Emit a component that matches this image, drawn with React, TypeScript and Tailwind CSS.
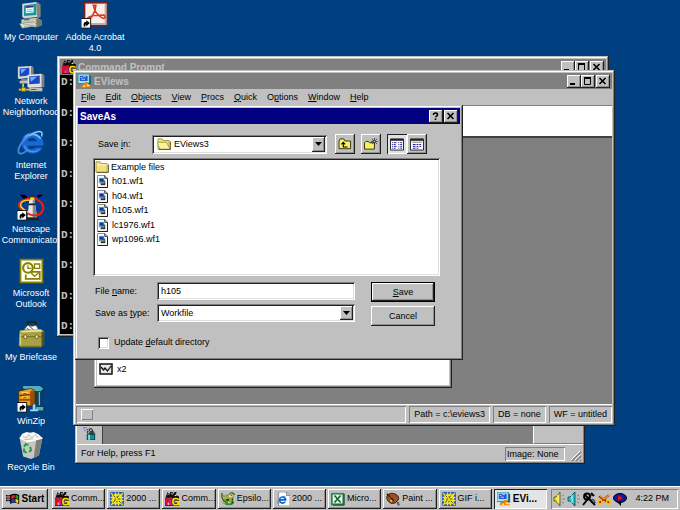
import type { ReactNode } from 'react';
import clsx from 'clsx';

const raised =
  'bg-[#c0c0c0] shadow-[inset_-1px_-1px_0_#202020,inset_1px_1px_0_#fff,inset_-2px_-2px_0_#909090]';
const windowFrame =
  'bg-[#c0c0c0] shadow-[inset_-1px_-1px_0_#202020,inset_1px_1px_0_#c0c0c0,inset_-2px_-2px_0_#808080,inset_2px_2px_0_#fff]';
const field =
  'bg-white shadow-[inset_1px_1px_0_#808080,inset_-1px_-1px_0_#fff,inset_2px_2px_0_#202020,inset_-2px_-2px_0_#dfdfdf]';
const groove = 'shadow-[inset_1px_1px_0_#808080,inset_-1px_-1px_0_#fff]';

/* ---------- desktop icons (32 unit grid) ---------- */

function Shortcut() {
  return (
    <g>
      <path d="M0 20h11v11H0z" fill="#fff" stroke="#000" />
      <path d="M3 29v-3q0-2 2-2h1v-2l4 3-4 4v-2H5v2z" fill="#000" />
    </g>
  );
}

function ComputerIcon() {
  return (
    <svg viewBox="0 0 32 32" className="h-7 w-7">
      <path d="M6 3 22 1l3 2v15L8 20l-2-2z" fill="#d8d8c8" />
      <path d="m22 1 5 3v14l-4 2z" fill="#808878" />
      <path d="m8 5 14-2v13L8 17z" fill="#189898" />
      <path d="m10 6 9-1v8l-9 1z" fill="#f4ffff" />
      <path d="m10 6 9-1v2l-9 1z" fill="#2030a0" />
      <path d="M11 10h7M11 12h7" stroke="#60c0c8" />
      <path d="M5 21 22 19l6 3v6l-7 2-16-2z" fill="#c8c8b8" />
      <path d="m22 20 6 2v6l-6 2z" fill="#707868" />
      <path d="M3 26 19 24l4 4-17 3z" fill="#f0f0e0" stroke="#808070" strokeWidth=".8" />
      <path d="M6 27.500 19 26M8 29l12-1.500" stroke="#909088" strokeWidth=".8" />
      <path d="M8 21.500h6" stroke="#404040" />
    </svg>
  );
}

function AcrobatIcon() {
  return (
    <svg viewBox="0 0 32 32" className="h-7 w-7">
      <path d="M3 1h28v28H3z" fill="#802018" />
      <path d="M5 3h24v24H5z" fill="#f8f0ec" />
      <path d="M27 3h2v24H5v-2h22z" fill="#b8b0a8" />
      <path
        d="M14 5h3l-1 6q-3 7-7 11-3 0-1-3 4-3 18-3 3 2 0 4-6-2-10-9z"
        fill="none"
        stroke="#e03820"
        strokeWidth="1.800"
      />
      <Shortcut />
    </svg>
  );
}

function NetworkIcon() {
  return (
    <svg viewBox="0 0 32 32" className="h-7 w-7">
      <path d="M1 2 16 1l2 1v12L3 16l-2-1z" fill="#d8d8d0" />
      <path d="m3 4 11-1v9L3 13z" fill="#1848c8" />
      <path d="m4 5 7-1-6 6z" fill="#78b0f8" />
      <path d="m16 1 3 2v11l-3 1zM5 16h9v3H5z" fill="#808080" />
      <path d="M3 18h14v3H3z" fill="#c0c0b8" />
      <path d="M12 11 28 10l3 2v13l-17 1-2-1z" fill="#e0e0d8" />
      <path d="m14 13 12-1v9l-12 1z" fill="#1848c8" />
      <path d="m15 14 8-1-7 6z" fill="#78b0f8" />
      <path d="m28 10 3 2v13h-3z" fill="#808080" />
      <path d="M14 26h15v4H14z" fill="#c0c0b8" />
      <path d="M16 28h6" stroke="#505050" />
      <path d="M7 21v6M2 28h12" stroke="#e8c820" strokeWidth="2" />
      <path d="M5 26h5v4H5z" fill="#f0d830" stroke="#806000" />
    </svg>
  );
}

function ExplorerIcon() {
  return (
    <svg viewBox="0 0 32 32" className="h-7 w-7">
      <path
        d="M17 4q-8 0-11 7-2 6 1 11 4 6 11 6 8 0 11-7h-8q-1 2-4 2-4 0-5-4h18q1-6-3-10-4-5-10-5zm-5 10q1-4 5-4t6 4z"
        fill="#1868d8"
      />
      <path d="M8 13q2-7 9-7 7 0 10 5" fill="none" stroke="#78c0f8" strokeWidth="2" />
      <path d="M8 19q3 7 10 7 5 0 8-3" fill="none" stroke="#4898f0" strokeWidth="1.500" />
      <path
        d="M28 9q3-7-4-6Q14 5 6 15-1 25 3 28q3 1 8-3"
        fill="none"
        stroke="#4888d8"
        strokeWidth="2"
      />
      <path d="M28 8q2-6-4-5-5 1-10 5" fill="none" stroke="#b8e0ff" />
    </svg>
  );
}

function NetscapeIcon() {
  return (
    <svg viewBox="0 0 32 32" className="h-7 w-7">
      <path d="M2 1h28v28H2z" fill="#083890" />
      <path d="M3 2h6l3 3-4 2zM23 2h7l-6 4z" fill="#000" />
      <path d="m14 4 3-3 4 3v4h-7z" fill="#303030" />
      <path d="M14 8h6l3 20H12z" fill="#e8e8e8" />
      <path d="M18 8h2l3 20h-5z" fill="#888" />
      <path d="M13 12h8v2h-8zM10 28h15v3H10z" fill="#202020" />
      <path d="M15 5h5v3h-5z" fill="#f8e020" />
      <path d="M14 6Q2 8 2 14q1 6 14 11 9 2 12-3" fill="none" stroke="#e82010" strokeWidth="2" />
      <path d="M15 8Q4 8 4 14q1 4 9 8" fill="none" stroke="#f8d820" strokeWidth="1.800" />
      <path d="M20 6q10 4 10 11 0 5-6 8" fill="none" stroke="#e82010" strokeWidth="2.500" />
      <Shortcut />
    </svg>
  );
}

function OutlookIcon() {
  return (
    <svg viewBox="0 0 32 32" className="h-7 w-7">
      <path d="M3 2h27v28H3z" fill="#888008" />
      <path d="M5 4h23v24H5z" fill="#fffff0" />
      <path d="M13 17h13v8H10v-5" fill="none" stroke="#888008" strokeWidth="2" />
      <path d="m16 18 4 4 5-4" fill="none" stroke="#888008" strokeWidth="1.500" />
      <circle cx="12.500" cy="12.500" r="5.500" fill="#fffff0" stroke="#888008" strokeWidth="2.500" />
      <path d="M12.500 9.500v3.500H16" fill="none" stroke="#888008" strokeWidth="1.500" />
      <path d="M20 8h6v5h-6z" fill="none" stroke="#888008" strokeWidth="1.500" />
    </svg>
  );
}

function BriefcaseIcon() {
  return (
    <svg viewBox="0 0 32 32" className="h-7 w-7">
      <path d="M12 8V3q0-2 3-2h4q3 0 3 2v4" fill="none" stroke="#202010" strokeWidth="1.800" />
      <path d="m8 10 4-5 5 1 5-1 3 6z" fill="#fff" stroke="#606060" strokeWidth=".8" />
      <path d="m11 8 4 3M14 6l5 4" stroke="#404040" />
      <path d="M3 11 27 9l4 3v15l-4 3H5l-3-2z" fill="#a8a048" />
      <path d="m3 11 24-1 4 2-25 1z" fill="#e8e088" />
      <path d="M28 12h3v15l-3 3z" fill="#585010" />
      <path d="M3 18h25M5 29h22" stroke="#686018" />
      <path d="M8 16h3v4H8zM21 16h3v4h-3z" fill="#f8f0a0" stroke="#504808" strokeWidth=".7" />
      <path d="M4 14v13" stroke="#d8d078" strokeWidth="1.500" />
    </svg>
  );
}

function WinZipIcon() {
  return (
    <svg viewBox="0 0 32 32" className="h-7 w-7">
      <path d="M6 2 26 1l4 3v4h-4l-3 3v11l3 3h4v4l-5 1" fill="none" stroke="#103840" strokeWidth="2" />
      <path d="M7 1h19l4 3-3 3h-4L7 4z" fill="#50b0c0" />
      <path d="M23 7h4v17h-4z" fill="#184850" />
      <path d="M25 8h1v15h-1z" fill="#90e0e8" />
      <path d="M22 25h8v4h-9z" fill="#50b0c0" />
      <path d="M18 22h3v7h-3zM15 28h9v2h-9z" fill="#a0d8e0" />
      <path d="m2 7 13-3 5 2v15l-5 3-13-1z" fill="#f0a018" stroke="#402000" strokeWidth=".8" />
      <path d="m15 7 5-1v15l-5 3z" fill="#985008" />
      <path d="m3 12 12-1M3 17h12" stroke="#803000" strokeWidth="1.500" />
      <path d="M6 9h6M6 14h6" stroke="#fff080" strokeWidth="2" />
      <path d="M7 9.500h4M7 14.500h4" stroke="#702000" />
      <Shortcut />
    </svg>
  );
}

function RecycleIcon() {
  return (
    <svg viewBox="0 0 32 32" className="h-7 w-7">
      <path d="m3 8 10 4 16-4-4 20-9 4-9-3z" fill="#c8c8c0" />
      <path d="m22 10 7-2-4 20-6 3z" fill="#808078" />
      <path d="m3 8 3-5 5-2 4 1 4-1 6 3 4 4-11 4H12z" fill="#f8f8f4" />
      <path d="m7 6 4 2 2-4 4 4 4-4 3 4M6 9l5 1 5-1 5 1" fill="none" stroke="#b0b0a8" />
      <path d="m3 8 9 4 17-4" fill="none" stroke="#fff" strokeWidth="1.500" />
      <path
        d="m8 18 2-3 3 1m2 2 1 4-2 2m-3 1-3-2v-3"
        fill="none"
        stroke="#20a040"
        strokeWidth="2.300"
      />
    </svg>
  );
}

/* ---------- small icons (16 unit grid) ---------- */

function PromptIcon() {
  return (
    <svg viewBox="0 0 16 16" className="h-[14px] w-[14px] shrink-0">
      <path d="M1 5 3 0l2 3 1-3h3L8 4l3-4h3l-2 3 4 2v2H1z" fill="#101010" />
      <path d="M3 3h1M7 2h1M11 4h2M13 1h1" stroke="#fff" />
      <path d="M0 6h3l1 2 1-2h3v9H5v-3H3v3H0z" fill="#e00828" />
      <path d="M5 9h4v6H5z" fill="#d018a0" />
      <path d="M15 8q-6-2-6 3t6 3v-3h-3" fill="none" stroke="#302000" strokeWidth="3.500" />
      <path d="M15 8q-6-2-6 3t6 3v-3h-3" fill="none" stroke="#f8e000" strokeWidth="2" />
      <path d="M0 15.500h9" stroke="#400010" />
    </svg>
  );
}

function EViewsIcon() {
  return (
    <svg viewBox="0 0 16 16" className="h-[14px] w-[14px] shrink-0">
      <path d="M0 0h13v11H0z" fill="#a0e8f0" stroke="#086878" strokeWidth=".8" />
      <path d="M2 2h9v6H2z" fill="#2858d0" />
      <path d="M3 4h2M6 3h3M4 6h4" stroke="#c0d8ff" />
      <path d="M13 2h2v10H8v-2h5z" fill="#106880" />
      <path d="M4 11h7v2H4z" fill="#1898a8" />
      <path d="M3 15q1-4 4-3l1-3h3l1 3 3 3z" fill="#f08010" />
      <path d="M6 14h2M10 13h3" stroke="#fff060" strokeWidth="2" />
    </svg>
  );
}

function StarburstIcon() {
  return (
    <svg viewBox="0 0 16 16" className="h-[14px] w-[14px] shrink-0">
      <path d="M0 0h16v16H0z" fill="#2860c8" />
      <path
        d="m0 0 5 3 1-3 2 3 2-3 1 3 5-3-3 5 3 1-3 2 3 2-3 1 3 5-5-3-1 3-2-3-2 3-1-3-5 3 3-5-3-1 3-2-3-2 3-1z"
        fill="#f8e820"
      />
      <path d="m4 4 2 2m4-2-2 3m4 5-2-2m-6 2 2-3M5 8h2M9 8h3M8 5v1M8 10v2M3 2l1 1M13 13l-1-1" stroke="#403800" />
    </svg>
  );
}

function EpsilonIcon() {
  return (
    <svg viewBox="0 0 16 16" className="h-[14px] w-[14px] shrink-0">
      <path d="m1 1 3 3 3-2 2 3 3-4 3 1-1 12-6 1-6-2z" fill="#90a848" />
      <path d="M1 1v5l2 4 3 1M8 4l4-4 4 3" fill="none" stroke="#203010" />
      <path d="M3 6h3v2H3zM9 3h4v3H9z" fill="#f8f0a0" />
      <path d="M4 7h1M11 4h1M6 9h3" stroke="#000" strokeWidth="1.500" />
      <path d="M5 11h8v4H5z" fill="#289050" />
      <path d="M8 12h3" stroke="#f0e040" strokeWidth="1.500" />
      <path d="M13 7v6l2-1" fill="none" stroke="#104020" />
    </svg>
  );
}

function WebPageIcon() {
  return (
    <svg viewBox="0 0 16 16" className="h-[14px] w-[14px] shrink-0">
      <path d="M3 0h9l4 4v12H3z" fill="#fff" stroke="#707070" strokeWidth=".8" />
      <path d="M12 0v4h4" fill="#c0c0c0" stroke="#707070" strokeWidth=".8" />
      <path d="M10.500 11a3.500 3.500 0 1 1 .5-2H5" fill="none" stroke="#1060d8" strokeWidth="2" />
      <path d="M11 5Q7 4 2 10q-2 4 2 3" fill="none" stroke="#40a0f0" />
    </svg>
  );
}

function ExcelIcon() {
  return (
    <svg viewBox="0 0 16 16" className="h-[14px] w-[14px] shrink-0">
      <path d="M0 1h15v14H0z" fill="#308850" />
      <path d="M2 3h11v10H2z" fill="#e8f8e8" />
      <path d="m4 4 7 8M11 4l-7 8" stroke="#186838" strokeWidth="2" />
      <path d="M15 2v13H2" fill="none" stroke="#083818" />
    </svg>
  );
}

function PaintIcon() {
  return (
    <svg viewBox="0 0 16 16" className="h-[14px] w-[14px] shrink-0">
      <path d="M1 5q3-5 9-3 6 3 4 7-3 5-8 4-6-3-5-8z" fill="#a05020" stroke="#301000" />
      <path d="M4 5h2v2H4zM5 9h2v2H5z" fill="#f0d820" />
      <path d="M8 4h2v2H8z" fill="#e03020" />
      <path d="M10 7h2v2h-2z" fill="#2080e0" />
      <path d="m1 2 8 8" stroke="#202020" strokeWidth="1.500" />
      <path d="M15 12h-2v1.500h2V15h-2" fill="none" stroke="#202020" strokeWidth=".8" />
    </svg>
  );
}

function WindowsFlag() {
  return (
    <svg viewBox="0 0 17 14" className="h-3 w-[14px] shrink-0">
      <path d="M0 3h2M3 3h2M0 6h2M3 6h2M0 9h2M3 9h2" stroke="#000" strokeWidth="1.500" />
      <path d="M0 4.500h4" stroke="#c01010" />
      <path d="M0 8h4" stroke="#1030a0" />
      <path d="M5 2q5-3 11 0v11q-6-3-11 0z" fill="#000" />
      <path d="M6.500 3q2-1 4-1v4q-2 0-4 1z" fill="#f02010" />
      <path d="M11.500 2q2 0 3.500 1v4l-3.500-1z" fill="#10a030" />
      <path d="M6.500 8q2-1 4-1v4q-2 0-4 1z" fill="#2040e0" />
      <path d="M11.500 7q2 0 3.500 1v4l-3.500-1z" fill="#f8d810" />
    </svg>
  );
}

function Folder({ open = false }: { open?: boolean }) {
  return (
    <svg viewBox="0 0 16 14" className="h-3 w-[14px] shrink-0">
      <path d="M1 3V1h5l1 2h7v10H1z" fill="#f0e080" stroke="#989040" />
      {open ? (
        <path d="M0 5h11l4 8H3z" fill="#fff098" stroke="#a09848" />
      ) : (
        <path d="M2 4.500h12" stroke="#fffcd0" />
      )}
      <path d="M2 13.500h13.500V4" fill="none" stroke="#504810" />
    </svg>
  );
}

function WorkfileIcon() {
  return (
    <svg viewBox="0 0 12 14" className="h-[13px] w-[11px] shrink-0">
      <path d="M.5.5h8l3 3v10H.5z" fill="#fff" stroke="#808080" />
      <path d="M11.500 4v9.500H1M8.500.5v3h3" fill="none" stroke="#101010" />
      <path d="M2 3h6v6H2z" fill="#58b0c8" />
      <path d="M3 4h4v3H3z" fill="#1828a0" />
      <path d="M5 6h4v4H5z" fill="#2050a0" />
      <path d="M4 9h5v2H4z" fill="#303030" />
      <path d="M5 8.500h3" stroke="#f0c010" />
    </svg>
  );
}

function SeriesIcon() {
  return (
    <svg viewBox="0 0 14 12" className="h-3 w-[14px]">
      <path d="M1 1h12v10H1z" fill="#e8e8e8" stroke="#101010" strokeWidth="1.500" />
      <path d="m2 4 2.500 3L6 5l2.500 3L12 3" fill="none" stroke="#101010" strokeWidth="1.300" />
    </svg>
  );
}

function SprayIcon() {
  return (
    <svg viewBox="0 0 14 14" className="h-[13px] w-[14px]">
      <path d="M0 1h2M3 3h2M1 4h1M3 0h1M4 5h1" stroke="#2030c0" />
      <path d="M6 2h3l1 3H7zM5 4l-1 3M9 3l3 4" fill="none" stroke="#202020" />
      <path d="m4 8 3-3h3l3 3z" fill="#404040" />
      <path d="M4 8h8v6H4z" fill="#109098" stroke="#003840" />
      <path d="M6 8v6" stroke="#a0f0f0" strokeWidth="1.500" />
    </svg>
  );
}

function UpFolderIcon() {
  return (
    <svg viewBox="0 0 16 14" className="h-3 w-[14px]">
      <path d="M1 3.500 2.500 1h4L8 3.500h6.500v9H1z" fill="#f8f060" stroke="#202000" />
      <path d="M6 6v4.500h5M3.800 7.500 6 5l2.200 2.500" fill="none" stroke="#000" strokeWidth="1.300" />
    </svg>
  );
}

function NewFolderIcon() {
  return (
    <svg viewBox="0 0 16 14" className="h-3 w-[14px]">
      <path d="M.5 5.500 2 4h3l1 1.500h6v7.500H.5z" fill="#f8f060" stroke="#202000" />
      <path d="M12 0v8M8 4h8M9 1l6 6M15 1 9 7" stroke="#303030" strokeWidth=".9" />
      <path d="M11.500 3.500h1v1h-1z" fill="#fff" />
    </svg>
  );
}

function ListViewIcon({ details = false }: { details?: boolean }) {
  return (
    <svg viewBox="0 0 15 14" className="h-[13px] w-[14px]">
      <path d="M.5 1h14v12H.5z" fill="#fff" stroke="#202020" />
      <path d="M1 2h13" stroke="#202020" strokeWidth="2" />
      {details ? (
        <>
          <path d="M2 4.500h11" stroke="#808080" />
          <path d="M3 7h3M7 7h2M10 7h2M3 9h3M7 9h2M10 9h2M3 11h3M7 11h2" stroke="#101090" />
        </>
      ) : (
        <path
          d="M2 5h1M4 5h3M9 5h1M11 5h2M2 7h1M4 7h2M9 7h1M11 7h2M2 9h1M4 9h3M9 9h1M11 9h2M2 11h1M4 11h2M9 11h1M11 11h2"
          stroke="#101090"
        />
      )}
    </svg>
  );
}

function TrayIcons() {
  return (
    <svg viewBox="0 0 75 14" className="h-[14px] w-[75px] shrink-0">
      <path d="M1 5h2l4-5v14L3 9H1z" fill="#f0e020" stroke="#504800" strokeWidth=".8" />
      <path d="M5 3v8" stroke="#fffcc0" />
      <path d="m9 4 2-1M9 7h3M9 10l2 1" stroke="#808080" />
      <path d="M15 5h2l5-5v14l-5-5h-2z" fill="#30c0d0" stroke="#004850" strokeWidth=".8" />
      <path d="M19 3v8" stroke="#c0ffff" />
      <path d="m24 4 2-1M24 7h3M24 10l2 1" stroke="#808080" />
      <circle cx="34" cy="4.500" r="3" fill="#d8d8d8" stroke="#000" strokeWidth="1.800" />
      <path d="m30 13 8-10M31 2l11 11M38 1l3 3" stroke="#000" strokeWidth="2" />
      <path d="M38 8q3-2 4 3" fill="none" stroke="#304060" strokeWidth="1.500" />
      <path d="m46 4 10 7M46 11 56 3" stroke="#d02010" strokeWidth="2.200" />
      <circle cx="47" cy="10" r="2" fill="none" stroke="#e8c810" strokeWidth="1.500" />
      <circle cx="55.500" cy="10" r="2" fill="none" stroke="#e8c810" strokeWidth="1.500" />
      <path d="m46 3 5 4 5-4" fill="none" stroke="#f0d010" />
      <ellipse cx="67" cy="6" rx="6.500" ry="4.500" fill="#1018a0" stroke="#000" />
      <path d="m63 9 5 5v-5z" fill="#000" />
      <path d="m65 3 5 3-5 3z" fill="#e01010" />
    </svg>
  );
}

/* ---------- window parts ---------- */

type CaptionKind = 'min' | 'max' | 'close' | 'help';

function CaptionButton({ kind }: { kind: CaptionKind }) {
  return (
    <button aria-label={kind} className={clsx('flex h-[13px] w-[14px] items-center justify-center', raised)}>
      <svg viewBox="0 0 10 9" className="h-[9px] w-[10px]" fill="none" stroke="#000">
        {kind === 'min' && <path d="M1 7h5" strokeWidth="2" />}
        {kind === 'max' && <path d="M1 1.500h7M1.500 1v6.500h6V1M1 .5h7" />}
        {kind === 'close' && <path d="m1.500 1 6 6M7.500 1l-6 6" strokeWidth="1.600" />}
        {kind === 'help' && <path d="M2.500 3q0-2 2-2t2 1.500T4.500 5M4.500 6.500V8" strokeWidth="1.600" />}
      </svg>
    </button>
  );
}

interface TitleBarProps {
  title: string;
  icon?: ReactNode;
  active?: boolean;
  buttons: CaptionKind[];
}

function TitleBar({ title, icon, active = false, buttons }: TitleBarProps) {
  return (
    <div
      className={clsx(
        'flex h-4 shrink-0 items-center gap-[2px] px-[2px] text-[10px] font-bold',
        active ? 'bg-[#000080] text-white' : 'bg-[#808080] text-[#c0c0c0]',
      )}
    >
      {icon}
      <span className="flex-1 whitespace-nowrap">{title}</span>
      <div className="flex">
        {buttons.map((kind) => (
          <div key={kind} className={kind === 'close' ? 'pl-px' : ''}>
            <CaptionButton kind={kind} />
          </div>
        ))}
      </div>
    </div>
  );
}

// Underlines the keyboard shortcut letter at index `at`
function Mnemonic({ text, at = 0 }: { text: string; at?: number }) {
  return (
    <>
      {text.slice(0, at)}
      <u>{text[at]}</u>
      {text.slice(at + 1)}
    </>
  );
}

const shortcuts = [
  { lines: ['My Computer'], icon: <ComputerIcon /> },
  { lines: ['Network', 'Neighborhood'], icon: <NetworkIcon /> },
  { lines: ['Internet', 'Explorer'], icon: <ExplorerIcon /> },
  { lines: ['Netscape', 'Communicator'], icon: <NetscapeIcon /> },
  { lines: ['Microsoft', 'Outlook'], icon: <OutlookIcon /> },
  { lines: ['My Briefcase'], icon: <BriefcaseIcon /> },
  { lines: ['WinZip'], icon: <WinZipIcon />, short: true },
  { lines: ['Recycle Bin'], icon: <RecycleIcon />, short: true },
];

const menu = [
  { text: 'File' },
  { text: 'Edit' },
  { text: 'Objects' },
  { text: 'View' },
  { text: 'Procs' },
  { text: 'Quick' },
  { text: 'Options', at: 1 },
  { text: 'Window' },
  { text: 'Help' },
];

const files = ['h01.wf1', 'h04.wf1', 'h105.wf1', 'lc1976.wf1', 'wp1096.wf1'];

const tasks = [
  { label: 'Comm...', icon: <PromptIcon /> },
  { label: '2000 ...', icon: <StarburstIcon /> },
  { label: 'Comm...', icon: <PromptIcon /> },
  { label: 'Epsilo...', icon: <EpsilonIcon /> },
  { label: '2000 ...', icon: <WebPageIcon /> },
  { label: 'Micro...', icon: <ExcelIcon /> },
  { label: 'Paint ...', icon: <PaintIcon /> },
  { label: 'GIF i...', icon: <StarburstIcon /> },
  { label: 'EVi...', icon: <EViewsIcon />, active: true },
];

function DesktopIcon({ lines, icon, short = false }: { lines: string[]; icon: ReactNode; short?: boolean }) {
  return (
    <button
      className={clsx(
        'flex w-[62px] shrink-0 flex-col items-center gap-[3px] leading-[11px] text-white',
        short ? 'h-[46px]' : 'h-16',
      )}
    >
      {icon}
      <span className="whitespace-nowrap">
        {lines.map((line) => (
          <span key={line} className="block">
            {line}
          </span>
        ))}
      </span>
    </button>
  );
}

function ComboArrow() {
  return (
    <span
      className={clsx(
        'pointer-events-none absolute top-[2px] right-[2px] bottom-[2px] flex w-[13px] items-center justify-center',
        raised,
      )}
    >
      <svg viewBox="0 0 7 4" className="h-1 w-[7px]">
        <path d="M0 0h7L3.500 4z" fill="#000" />
      </svg>
    </span>
  );
}

function SaveDialog() {
  const toolButton = 'flex h-5 w-5 items-center justify-center';
  return (
    <div role="dialog" aria-label="SaveAs" className={clsx('absolute top-[105px] left-[75px] h-[255px] w-[388px] p-[3px]', windowFrame)}>
      <TitleBar title="SaveAs" active buttons={['help', 'close']} />
      <div className="px-[15px] pt-[10px]">
        <div className="flex items-center">
          <label htmlFor="folder" className="w-[59px] pl-[5px]">
            <Mnemonic text="Save in:" at={5} />
          </label>
          <div className="relative w-[175px]">
            <select id="folder" className={clsx('h-[19px] w-full appearance-none pl-[22px]', field)}>
              <option>EViews3</option>
            </select>
            <span className="pointer-events-none absolute top-[3px] left-[5px]">
              <Folder open />
            </span>
            <ComboArrow />
          </div>
          <div className="flex pl-2">
            <button aria-label="Up one level" className={clsx(toolButton, raised)}>
              <UpFolderIcon />
            </button>
            <button aria-label="Create new folder" className={clsx('ml-[6px]', toolButton, raised)}>
              <NewFolderIcon />
            </button>
            <button
              aria-label="List"
              className={clsx(
                'ml-[6px] bg-[#e0e0e0] shadow-[inset_1px_1px_0_#202020,inset_-1px_-1px_0_#fff]',
                toolButton,
              )}
            >
              <ListViewIcon />
            </button>
            <button aria-label="Details" className={clsx(toolButton, raised)}>
              <ListViewIcon details />
            </button>
          </div>
        </div>

        <div className={clsx('mt-1 h-[118px] w-[347px] p-[2px]', field)}>
          <ul className="grid h-[87px] grid-rows-6">
            <li className="flex items-center gap-[2px]">
              <Folder />
              Example files
            </li>
            {files.map((file) => (
              <li key={file} className="flex items-center gap-1 pl-[2px]">
                <WorkfileIcon />
                {file}
              </li>
            ))}
          </ul>
        </div>

        <div className="flex justify-between pt-[6px] pr-[10px]">
          <div className="grid grid-cols-[64px_198px] content-start items-center gap-y-1">
            <label htmlFor="name" className="pl-[2px]">
              <Mnemonic text="File name:" at={5} />
            </label>
            <input id="name" defaultValue="h105" className={clsx('h-[18px] px-1', field)} />
            <label htmlFor="type" className="pl-[2px] whitespace-nowrap">
              <Mnemonic text="Save as type:" at={8} />
            </label>
            <div className="relative">
              <select id="type" className={clsx('h-[18px] w-full appearance-none px-1', field)}>
                <option>Workfile</option>
              </select>
              <ComboArrow />
            </div>
          </div>
          <div className="flex flex-col gap-1">
            <button className={clsx('h-5 w-16 border border-black', raised)}>
              <Mnemonic text="Save" />
            </button>
            <button className={clsx('h-5 w-16', raised)}>Cancel</button>
          </div>
        </div>

        <label className="flex items-center gap-[5px] pt-[10px] pl-[5px]">
          <input type="checkbox" className={clsx('h-3 w-[11px] appearance-none', field)} />
          <span>
            <Mnemonic text="Update default directory" at={7} />
          </span>
        </label>
      </div>
    </div>
  );
}

function CommandPrompt() {
  return (
    <div className={clsx('absolute top-[56px] left-[57px] flex h-[281px] w-[552px] flex-col p-[3px]', windowFrame)}>
      <TitleBar title="Command Prompt" icon={<PromptIcon />} buttons={['min', 'max', 'close']} />
      <div className="flex-1 overflow-hidden bg-black pl-px font-['Liberation_Mono'] text-[11px] font-bold text-[#c0c0c0]">
        <div className="grid h-[275px] auto-rows-fr">
          {Array.from({ length: 9 }, (_, i) => (
            <span key={i} className="leading-[15px]">
              D:
            </span>
          ))}
        </div>
      </div>
    </div>
  );
}

function ImageWindow() {
  return (
    <div className={clsx('absolute top-[380px] left-[75px] flex h-[84px] w-[510px] flex-col p-[2px]', windowFrame)}>
      <div className="flex flex-1">
        <div className="flex w-[26px] items-end justify-center border-r border-[#404040] pb-1">
          <SprayIcon />
        </div>
        <div className="flex-1 bg-[#808080]" />
        <div className="w-[50px] border-b border-l border-b-[#808080] border-l-white" />
      </div>
      <div className="flex h-[18px] items-center border-t border-white pl-1">
        <span className="flex-1">For Help, press F1</span>
        <span className={clsx('w-[60px] pl-[2px] leading-[14px] whitespace-nowrap', groove)}>Image: None</span>
        <svg viewBox="0 0 18 16" className="h-4 w-[18px]">
          <path d="M7 15 16 6M11 15l5-5M15 15l1-1" stroke="#808080" strokeWidth="1.500" />
          <path d="m6 14 9-9M10 14l5-5" stroke="#fff" />
        </svg>
      </div>
    </div>
  );
}

function EViewsWindow() {
  const cell = 'flex h-[17px] items-center px-[5px] whitespace-nowrap';
  return (
    <div className={clsx('absolute top-[70px] left-[73px] flex h-[356px] w-[542px] flex-col p-[3px]', windowFrame)}>
      <TitleBar title="EViews" icon={<EViewsIcon />} buttons={['min', 'max', 'close']} />
      <nav className="flex h-4 items-center gap-[10px] pl-[5px]">
        {menu.map(({ text, at }) => (
          <button key={text}>
            <Mnemonic text={text} at={at} />
          </button>
        ))}
      </nav>
      <div className="h-[33px] border-t border-b-2 border-t-[#808080] border-b-[#404040] bg-white" />
      <div className="flex flex-1 flex-col bg-[#808080] pl-[18px]">
        {/* workfile window, its upper part lies under the dialog */}
        <div className={clsx('mt-auto mb-4 flex h-[60px] w-[358px] p-[3px]', windowFrame)}>
          <div className="flex flex-1 items-end gap-1 bg-white pb-[10px] pl-[2px] leading-3">
            <SeriesIcon />
            x2
          </div>
        </div>
      </div>
      <div className="flex h-[19px] items-center gap-[3px] border-t border-white">
        <div className={clsx('flex-1', cell, groove)}>
          <span className="h-[11px] w-3 shadow-[inset_1px_1px_0_#fff,inset_-1px_-1px_0_#808080]" />
        </div>
        <div className={clsx(cell, groove)}>Path = c:\eviews3</div>
        <div className={clsx(cell, groove)}>DB = none</div>
        <div className={clsx(cell, groove)}>WF = untitled</div>
      </div>
    </div>
  );
}

function Taskbar() {
  return (
    <div className="flex h-6 shrink-0 items-center gap-1 border-t border-white bg-[#c0c0c0] px-[2px]">
      <button className={clsx('flex h-5 w-[46px] items-center justify-center gap-[2px] text-[10px] font-bold', raised)}>
        <WindowsFlag />
        Start
      </button>
      <div className="grid flex-1 grid-cols-9 gap-[2px]">
        {tasks.map(({ label, icon, active }, i) => (
          <button
            key={i}
            className={clsx(
              'flex h-5 items-center gap-[2px] pl-[3px] whitespace-nowrap',
              active
                ? 'bg-[#e4e4e4] text-[10px] font-bold shadow-[inset_1px_1px_0_#202020,inset_-1px_-1px_0_#fff]'
                : raised,
            )}
          >
            {icon}
            {label}
          </button>
        ))}
      </div>
      <div className={clsx('flex h-5 w-[127px] items-center justify-between pr-[9px] pl-[2px]', groove)}>
        <TrayIcons />
        4:22 PM
      </div>
    </div>
  );
}

export default function App() {
  return (
    <div className="flex h-screen flex-col overflow-hidden bg-[#004080] font-['Liberation_Sans',Arial,sans-serif] text-[9px] leading-[13px] text-black">
      <div className="relative flex flex-1 gap-[2px] overflow-hidden pt-px">
        <div className="flex flex-col">
          {shortcuts.map((item) => (
            <DesktopIcon key={item.lines[0]} {...item} />
          ))}
        </div>
        <DesktopIcon lines={['Adobe Acrobat', '4.0']} icon={<AcrobatIcon />} />
        <CommandPrompt />
        <ImageWindow />
        <EViewsWindow />
        <SaveDialog />
      </div>
      <Taskbar />
    </div>
  );
}
